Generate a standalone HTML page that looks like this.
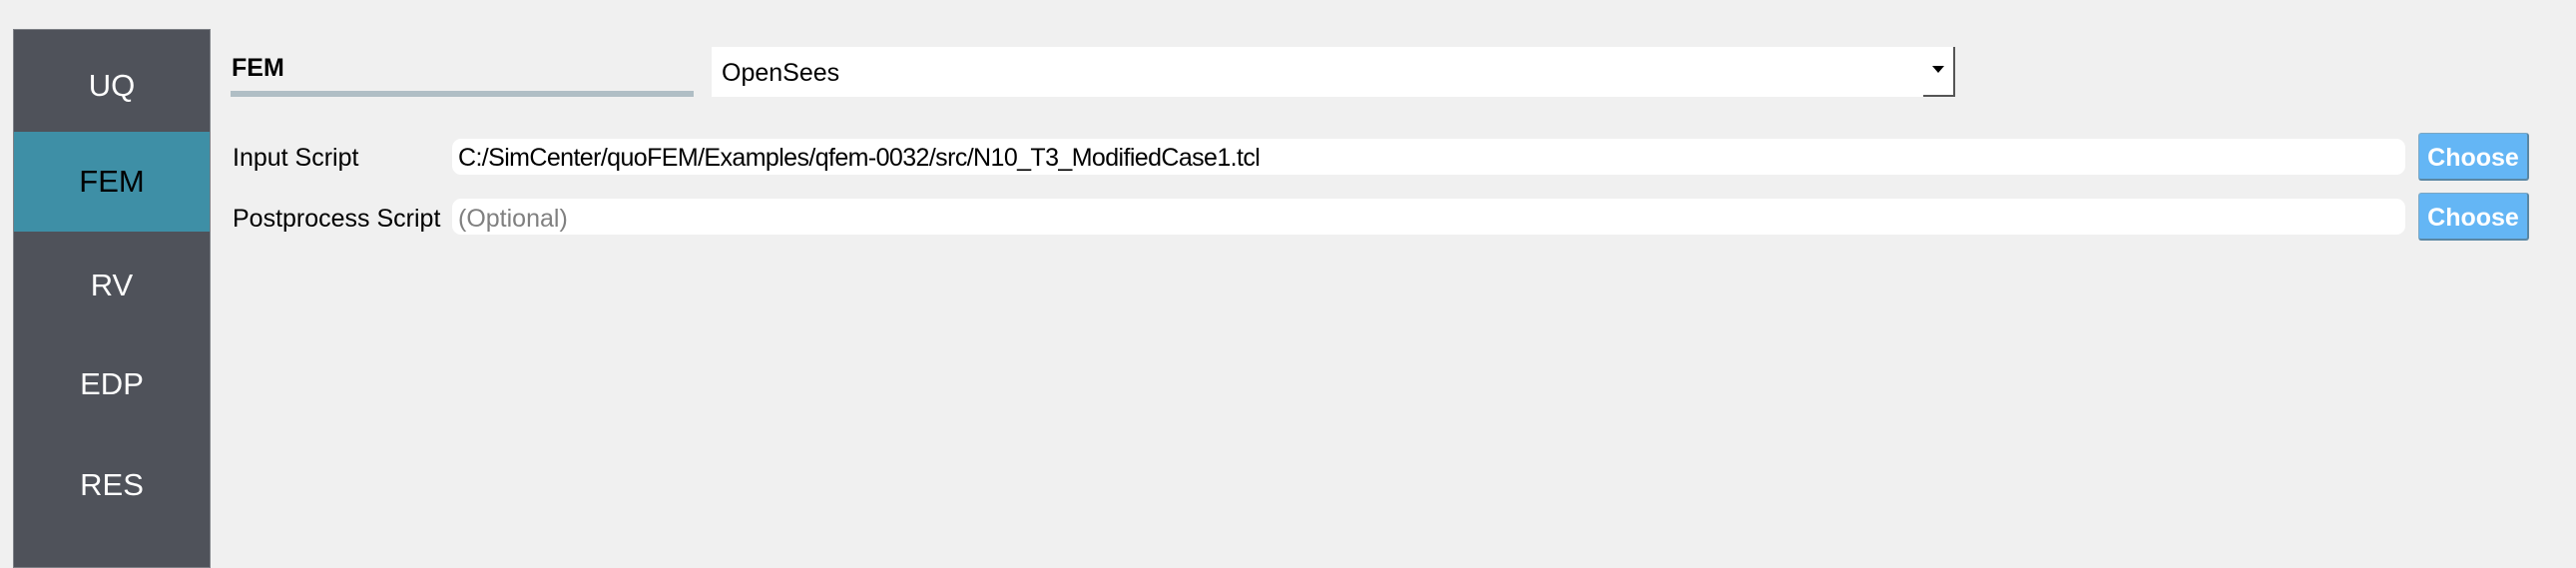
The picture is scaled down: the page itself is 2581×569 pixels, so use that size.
<!DOCTYPE html>
<html><head><meta charset="utf-8"><style>
body{margin:0;width:2581px;height:565px;background:#f0f0f0;font-family:"Liberation Sans",sans-serif;position:relative;overflow:hidden}
.a{position:absolute}
.side{left:13px;top:29px;width:198px;height:540px;background:#4f525a;border:1px solid #7d8086;box-sizing:border-box}
.it{position:absolute;left:0;width:196px;height:100px;color:#fff;font-size:31px;text-align:center;line-height:100px}
.lbl{font-size:25px;color:#000}
.fld{background:#fff;border-radius:9px;height:36px;left:453px;width:1957px}
.btn{left:2423px;width:111px;height:48px;background:#64b6f5;border:1px solid #7aa7c4;border-bottom:2px solid #5a87a4;border-right:2px solid #5a87a4;box-sizing:border-box;border-radius:3px;color:#fff;font-weight:bold;font-size:25px;text-align:center;line-height:48px}
</style></head><body>
<div class="a side">
<div class="it" style="top:6px">UQ</div>
<div class="it" style="top:102px;background:#3e8fa6;color:#000;height:100px">FEM</div>
<div class="it" style="top:206px">RV</div>
<div class="it" style="top:305px">EDP</div>
<div class="it" style="top:406px">RES</div>
</div>
<div class="a" style="left:232px;top:54px;font-weight:bold;font-size:25px">FEM</div>
<div class="a" style="left:231px;top:91px;width:464px;height:6px;background:#b0bec5"></div>
<div class="a" style="left:713px;top:47px;width:1246px;height:50px;background:#fff;border-right:2px solid #555;box-sizing:border-box"></div>
<div class="a" style="left:1927px;top:95px;width:32px;height:2px;background:#555"></div>
<div class="a" style="left:723px;top:59px;font-size:25px">OpenSees</div>
<div class="a" style="left:1936px;top:66px;width:0;height:0;border-left:6px solid transparent;border-right:6px solid transparent;border-top:7px solid #000"></div>
<div class="a lbl" style="left:233px;top:144px">Input Script</div>
<div class="a fld" style="top:139px"></div>
<div class="a lbl" style="left:459px;top:144px;letter-spacing:-0.6px">C:/SimCenter/quoFEM/Examples/qfem-0032/src/N10_T3_ModifiedCase1.tcl</div>
<div class="a btn" style="top:133px">Choose</div>
<div class="a lbl" style="left:233px;top:205px">Postprocess Script</div>
<div class="a fld" style="top:199px"></div>
<div class="a lbl" style="left:459px;top:205px;color:#808080">(Optional)</div>
<div class="a btn" style="top:193px">Choose</div>
</body></html>
